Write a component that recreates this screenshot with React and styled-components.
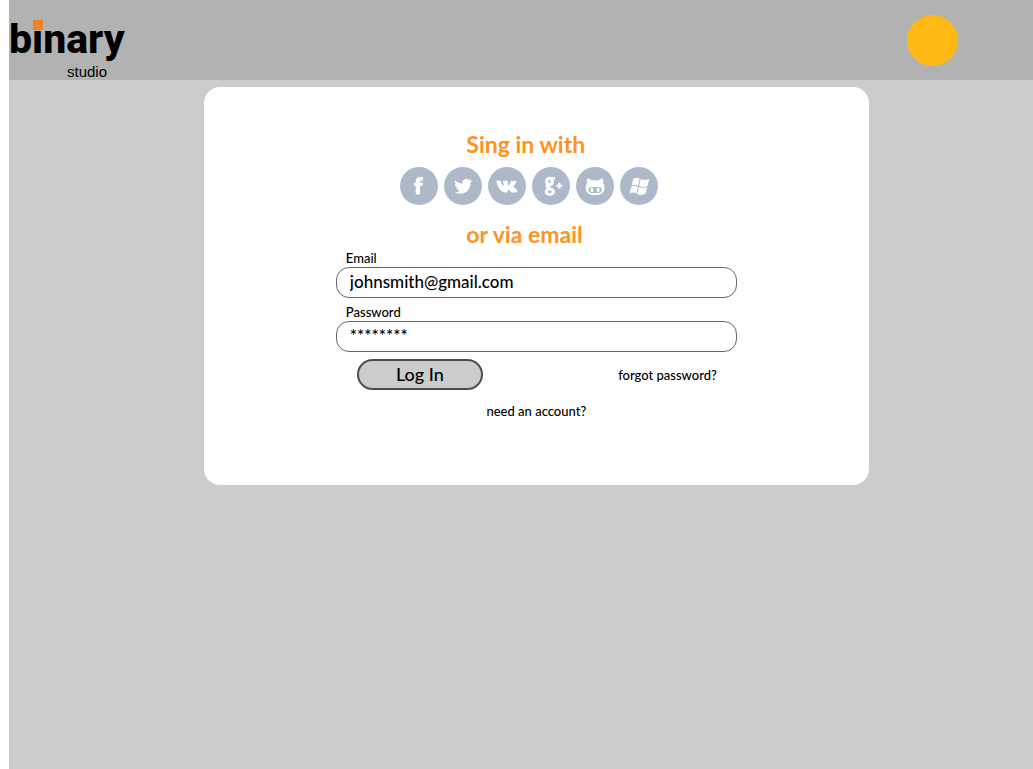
import React from "react";
import styled, { createGlobalStyle } from "styled-components";

const GlobalStyle = createGlobalStyle`
  *, *::before, *::after { box-sizing: border-box; }
  body {
    margin: 0;
    background: #fff;
    color: #000;
    font-family: Lato, "Open Sans", sans-serif;
    font-weight: 500;
  }
`;

const Page = styled.div`
  display: flex;
  flex-direction: column;
  min-height: 100vh;
  margin-left: 9px;
  background: #ccc;
`;

const Header = styled.header`
  display: flex;
  justify-content: space-between;
  align-items: center;
  height: 80px;
  padding-right: 75px;
  background: #b2b2b2;
`;

const Logo = styled.a`
  display: flex;
  flex-direction: column;
  padding-top: 14px;
  color: #000;
  text-decoration: none;
`;

const LogoName = styled.span`
  font: 800 41px/50px Roboto, "Liberation Sans", sans-serif;
`;

const LogoLetter = styled.span`
  position: relative;

  &::before {
    content: "";
    position: absolute;
    left: 1px;
    top: 5px;
    width: 10px;
    height: 10px;
    background: #f58220;
  }
`;

const LogoSub = styled.span`
  padding-left: 58px;
  font: 15px/16px "Liberation Sans", sans-serif;
`;

const Avatar = styled.button`
  width: 51px;
  height: 51px;
  padding: 0;
  border: 0;
  border-radius: 50%;
  background: #ffb912;
`;

const Main = styled.main`
  padding: 7px 16% 24px 19%;
`;

const Card = styled.section`
  display: flex;
  flex-direction: column;
  align-items: center;
  padding: 42px 24px 65px;
  border-radius: 16px;
  background: #fff;
`;

const Heading = styled.h2`
  width: 140px;
  margin: 0;
  color: #ff931e;
  font-size: 23px;
  line-height: 30px;
  font-weight: 700;
  white-space: nowrap;
`;

const SocialList = styled.ul`
  display: flex;
  gap: 6px;
  margin: 8px 15px 14px 0;
  padding: 0;
  list-style: none;
`;

const SocialLink = styled.a`
  display: block;
  width: 38px;
  height: 38px;
  border-radius: 50%;
  background: #adb9c9;
  color: #fff;
`;

const Glyph = styled.svg`
  display: block;
  width: 38px;
  height: 38px;
`;

const Form = styled.form`
  display: flex;
  flex-direction: column;
  width: 100%;
  max-width: 401px;
`;

const Label = styled.label`
  padding-left: 10px;
  font-size: 13px;
  line-height: 18px;
`;

const Input = styled.input`
  width: 100%;
  height: 31px;
  margin-bottom: 5px;
  padding: 0 13px 2px;
  border: 1px solid #666;
  border-radius: 13px;
  background: #fff;
  color: #000;
  font: inherit;
  font-size: 17px;
`;

const Actions = styled.div`
  display: flex;
  align-items: center;
  justify-content: space-between;
  margin-top: 2px;
  padding: 0 20px 0 21px;
`;

const SubmitButton = styled.button`
  width: 126px;
  height: 31px;
  padding: 0 0 2px;
  border: 2px solid #4d4d4d;
  border-radius: 16px;
  background: #ccc;
  color: #000;
  font: inherit;
  font-size: 18px;
`;

const TextLink = styled.a`
  color: #000;
  font-size: 13px;
  line-height: 18px;
  text-decoration: none;
`;

const SignUp = styled.p`
  display: flex;
  justify-content: center;
  margin: 12px 0 0;
`;

const networks = [
  {
    name: "Facebook",
    icon: (
      <path d="M15.800 27.500V19H14v-3.300h1.800v-1.500c0-2.900 1.700-4.200 4.300-4.200H23v3.400h-1.500c-1.100 0-1.400.4-1.400 1.300v1h2.800l-.4 3.300h-2.400v8.500Z" />
    ),
  },
  {
    name: "Twitter",
    icon: (
      <path d="M10.8 13.2c2 2 4.7 3.1 7.6 3.2-.4-2.6 1.3-4.500 3.700-4.600 1.100 0 2 .4 2.700 1.100l2.600-1-1.300 2.200 2.600-.4-2.300 2.400c.1 6.300-4.100 10.600-9.700 10.600-2.100 0-4.200-.6-6-1.700 2 .1 3.700-.4 5.100-1.500-1.800-.2-3-1.200-3.500-2.700h1.600c-1.800-.7-2.900-2-3-3.900l1.600.5c-1.600-1.200-2.100-2.700-1.700-4.200Z" />
    ),
  },
  {
    name: "VK",
    icon: (
      <path d="M8.2 13.8h4.4c.6 2.4 1.6 4.2 3 5.4v-3.500l-1.300-1.200c1.500-1 3.800-1 5.600-.5v5c1.200-.7 2.300-2.500 3.200-5h5.500c-.4 2.100-1.800 3.900-3.400 5.400 1.900 1.400 3.500 3 4.500 5.100-.3.9-4.200 1-6 .9l-3.600-3.200c-.2 1.700-.5 3-1.500 3.300-5.600.4-9.100-5.200-10.400-11.700Z" />
    ),
  },
  {
    name: "Google Plus",
    icon: (
      <g fill="none" stroke="#fff">
        <ellipse cx="17.5" cy="14.4" rx="3" ry="3" strokeWidth="3.2" />
        <path d="M18.5 11.2H23" strokeWidth="2.4" />
        <path d="M16.5 17.5c-2.3 1.9-1.1 2.9 1.9 3.8" strokeWidth="3" />
        <ellipse cx="17.8" cy="24.7" rx="3.6" ry="2.8" strokeWidth="3" />
        <path d="M27.3 15.8v6M24.3 18.8h6" strokeWidth="2" />
      </g>
    ),
  },
  {
    name: "GitHub",
    icon: (
      <>
        <path d="M11.2 11.5c1.9 0 3.5.9 4.8 2 2.1-.4 4.2-.4 6.2 0 1.3-1.1 2.9-2 4.7-2 .6 1.700.6 3.400.1 4.800 1 1.200 1.500 2.700 1.500 4.500 0 5.200-3.300 7.300-9.400 7.300S9.700 26 9.700 20.800c0-1.800.5-3.300 1.500-4.500-.6-1.500-.6-3.100 0-4.800Z" />
        <rect x="12.500" y="20" width="13.200" height="6" rx="3" fill="#adb9c9" />
        <ellipse cx="16" cy="23" rx="1.500" ry="2.200" />
        <ellipse cx="22.200" cy="23" rx="1.500" ry="2.200" />
      </>
    ),
  },
  {
    name: "Windows",
    icon: (
      <>
        <path d="M13.3 11.7c2.2-1.3 4.4-1.2 6.4-.1L18.2 18.4c-2-1-4.3-.9-6.6.2Z" />
        <path d="M20.7 12.1c2.5 1.2 5.2 1.2 8.6-.1l-1.8 6.9c-3.1 1.3-5.9 1.3-8.4 0Z" />
        <path d="M11.4 19.6c2.2-1.2 4.4-1.1 6.5-.1l-1.6 6.9c-2.1-1.1-4.3-1-6.6.1Z" />
        <path d="M18.9 19.9c2.5 1.3 5.3 1.2 8.3 0l-1.7 6.9c-3 1.5-5.9 1.5-8.3.1Z" />
      </>
    ),
  },
];

export default function App() {
  return (
    <>
      <GlobalStyle />
      <Page>
        <Header>
          <Logo href="#">
            <LogoName>b<LogoLetter>i</LogoLetter>nary</LogoName>
            <LogoSub>studio</LogoSub>
          </Logo>
          <Avatar type="button" aria-label="Profile" />
        </Header>
        <Main>
          <Card>
            <Heading>Sing in with</Heading>
            <SocialList>
              {networks.map(({ name, icon }) => (
                <li key={name}>
                  <SocialLink href="#" aria-label={name}>
                    <Glyph viewBox="0 0 38 38" fill="#fff" aria-hidden="true">{icon}</Glyph>
                  </SocialLink>
                </li>
              ))}
            </SocialList>
            <Heading>or via email</Heading>
            <Form onSubmit={(event) => event.preventDefault()}>
              <Label htmlFor="email">Email</Label>
              <Input id="email" type="email" defaultValue="johnsmith@gmail.com" />
              <Label htmlFor="password">Password</Label>
              <Input id="password" type="text" autoComplete="off" defaultValue="********" />
              <Actions>
                <SubmitButton type="submit">Log In</SubmitButton>
                <TextLink href="#">forgot password?</TextLink>
              </Actions>
              <SignUp>
                <TextLink href="#">need an account?</TextLink>
              </SignUp>
            </Form>
          </Card>
        </Main>
      </Page>
    </>
  );
}
